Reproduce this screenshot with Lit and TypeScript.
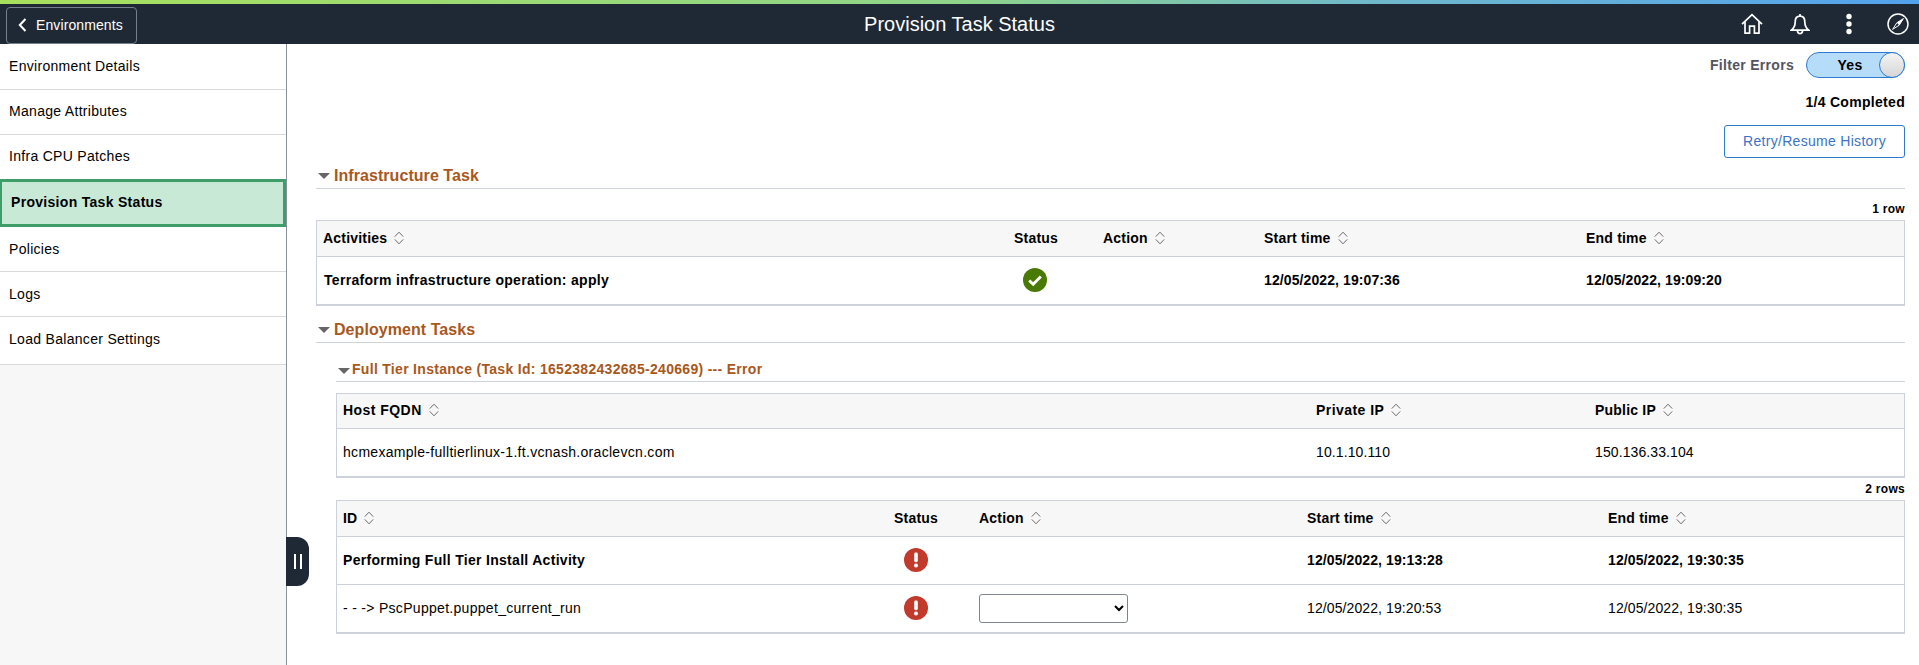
import { LitElement, html, css } from "lit";
import { customElement } from "lit/decorators.js";

const sortIcon = html`<svg class="sort" width="10" height="14" viewBox="0 0 10 14" fill="none" stroke="#6b6b6b" stroke-width="1"><path d="M.8 5.6 5 1.2l4.2 4.4M.8 8.4 5 12.8l4.2-4.4"/></svg>`;
const okIcon = html`<svg width="24" height="24" viewBox="0 0 24 24"><circle cx="12" cy="12" r="12" fill="#4a7a06"/><path d="M6.2 12.4l4 3.8 7.6-7.6" fill="none" stroke="#fff" stroke-width="2.8"/></svg>`;
const errIcon = html`<svg width="24" height="24" viewBox="0 0 24 24"><circle cx="12" cy="12" r="12" fill="#c13a2b"/><rect x="10.2" y="4.6" width="3.6" height="9.6" rx="1.4" fill="#fff"/><circle cx="12" cy="17.6" r="2" fill="#fff"/></svg>`;
const caret = html`<span class="caret"></span>`;

type Cell = string | ReturnType<typeof html>;
const head = (labels: [string, boolean][]) => html`<div class="row head">
  ${labels.map(([l, s]) => html`<div class="cell">${l}${s ? sortIcon : ""}</div>`)}
</div>`;
const body = (cells: Cell[], bold = false) => html`<div class="row ${bold ? "bold" : ""}">
  ${cells.map((c) => html`<div class="cell">${c}</div>`)}
</div>`;

@customElement("app-root")
export class AppRoot extends LitElement {
  static styles = css`
    :host { display: block; height: 665px; overflow: hidden; font-family: "Liberation Sans", Arial, sans-serif; font-size: 14px; letter-spacing: .3px; color: #000; background: #fff; }
    * { box-sizing: border-box; }
    .strip { height: 4px; background: linear-gradient(90deg, #a8e05c 0%, #8fd48a 50%, #6fb8cc 72%, #52a2ee 100%); }
    .bar { height: 40px; background: #1e2935; display: grid; grid-template-columns: 1fr auto 1fr; align-items: center; color: #fff; }
    .back { justify-self: start; margin: 2px 0 0 6px; width: 131px; height: 37px; border: 1px solid #76808c; border-radius: 4px; display: flex; align-items: center; gap: 9px; padding-left: 11px; color: #fff; letter-spacing: .1px; }
    .title { font-size: 20px; letter-spacing: 0; }
    .tools { justify-self: end; display: flex; align-items: center; }
    .tools svg { display: block; }
    .i1 { margin-right: 27px; } .i2 { margin-right: 36px; } .i3 { margin-right: 35px; } .i4 { margin-right: 10px; }
    .page { display: flex; height: 621px; position: relative; }
    .side { width: 287px; flex: none; background: #f7f7f7; border-right: 1px solid #8a9199; }
    .item { height: 45px; background: #fff; border-bottom: 1px solid #d9d9d9; display: flex; align-items: center; padding: 0 0 2px 9px; }
    .item.first { height: 46px; }
    .item.nb { border-bottom: 0; height: 44px; }
    .item.active { height: 48px; background: #c8e9d6; border: 3px solid #3e9d68; border-left-width: 2px; font-weight: 700; padding-left: 9px; }
    .item.mid { padding-bottom: 0; }
    .item.last { height: 48px; padding-bottom: 4px; }
    .handle { position: absolute; left: 286px; top: 493px; width: 23px; height: 49px; background: #1e2935; border-radius: 0 12px 12px 0; display: flex; align-items: center; justify-content: center; gap: 4px; }
    .handle i { display: block; width: 2px; height: 15px; background: #fff; }
    .main { flex: 1; padding: 8px 14px 0 29px; min-width: 0; }
    .filter { display: flex; justify-content: flex-end; align-items: center; height: 26px; gap: 12px; }
    .filter b { color: #55555c; }
    .toggle { width: 99px; height: 26px; border-radius: 13px; border: 1px solid #2f7bd1; background: #b5dcf8; display: flex; align-items: center; position: relative; font-weight: 700; padding-left: 22px; }
    .toggle span { width: 42px; text-align: center; }
    .knob { position: absolute; right: -1px; top: -1px; width: 26px; height: 26px; border-radius: 50%; border: 1px solid #2f7bd1; background: linear-gradient(#f4f4f4, #d6d6d6); }
    .done { margin-top: 16px; height: 16px; line-height: 16px; text-align: right; font-weight: 700; }
    .btnrow { margin-top: 15px; display: flex; justify-content: flex-end; }
    .btn { width: 181px; height: 33px; border: 1px solid #2f78cf; border-radius: 3px; display: flex; align-items: center; justify-content: center; color: #3d72c4; padding-bottom: 1px; }
    .sec { display: flex; align-items: center; height: 25px; border-bottom: 1px solid #cfd3da; font-weight: 700; font-size: 16px; letter-spacing: .06px; color: #a9581c; padding-left: 2px; padding-bottom: 1px; }
    .sec.one { margin-top: 6px; }
    .sec.two { margin-top: 12px; }
    .caret { width: 0; height: 0; border-left: 6px solid transparent; border-right: 6px solid transparent; border-top: 6px solid #666; margin: 1px 4px 0 0; }
    .sub { margin: 15px 0 0 20px; display: flex; align-items: center; height: 24px; border-bottom: 1px solid #cfd3da; font-weight: 700; color: #a9581c; padding-left: 2px; padding-bottom: 1px; }
    .sub .caret { margin-right: 2px; margin-top: 3px; }
    .count { height: 16px; line-height: 16px; text-align: right; font-size: 12px; font-weight: 700; }
    .count.a { margin-top: 12px; margin-bottom: 3px; }
    .count.b { margin-top: 3px; margin-bottom: 3px; }
    .table { border: 1px solid #cdd2da; border-bottom-width: 2px; }
    .nest { margin-left: 20px; }
    .table.host { margin-top: 11px; }
    .row { display: grid; height: 48px; align-items: center; border-bottom: 1px solid #cdd2da; }
    .row:last-child { border-bottom: 0; height: 47px; }
    .row.head { height: 36px; background: #f7f7f7; font-weight: 700; letter-spacing: .2px; }
    .host .row.head { height: 35px; }
    .row.bold { font-weight: 700; }
    .cell { padding: 0 0 2px 7px; display: flex; align-items: center; min-width: 0; white-space: nowrap; }
    .sort { margin-left: 7px; }
    .c1 .row { grid-template-columns: 691px 89px 161px 322px 1fr; }
    .c1 .cell { padding-left: 6px; }
    .c1 .row:not(.head) .cell:first-child { padding-left: 7px; }
    .c1 .row:not(.head) .cell:nth-child(2) { padding-left: 15px; }
    .c1 .row:not(.head) .cell:nth-child(n+4), .c3 .row:not(.head) .cell:nth-child(n+4), .c2 .row:not(.head) .cell:nth-child(n+2) { letter-spacing: .1px; }
    .c2 .row { grid-template-columns: 972px 279px 1fr; }
    .c2 .cell:first-child, .c3 .cell:first-child { padding-left: 6px; }
    .c2 .row.head .cell:nth-child(-n+2) { letter-spacing: .45px; }
    .c3 .row { grid-template-columns: 550px 85px 328px 301px 1fr; }
    .c3 .row:not(.head) .cell:nth-child(2) { padding-left: 17px; }
    .c3 .row:not(.head) .cell:nth-child(3) { padding-bottom: 0; }
    select { width: 149px; height: 29px; background: #fff; border: 1px solid #7d858f; border-radius: 3px; font: inherit; }
  `;

  render() {
    const items = ["Environment Details", "Manage Attributes", "Infra CPU Patches", "Provision Task Status", "Policies", "Logs", "Load Balancer Settings"];
    const cls = ["first", "", "nb", "active", "mid", "mid", "last"];
    return html`
      <div class="strip"></div>
      <div class="bar">
        <div class="back">
          <svg width="9" height="14" viewBox="0 0 9 14" fill="none" stroke="#fff" stroke-width="2"><path d="M7.5 1 1.8 7l5.7 6"/></svg>
          <span>Environments</span>
        </div>
        <div class="title">Provision Task Status</div>
        <div class="tools">
          <svg class="i1" width="22" height="22" viewBox="0 0 22 22" fill="none" stroke="#fff" stroke-width="1.7"><path d="M1 11.2 11 1.6l10 9.6"/><path d="M4 9v11.2h4.6v-7h4.8v7H18V9"/></svg>
          <svg class="i2" width="20" height="22" viewBox="0 0 20 22" fill="none" stroke="#fff" stroke-width="1.7"><path d="M10 1v2.2M10 3.2c-3.4 0-4.8 2.6-4.8 5.6 0 4.4-1.5 6.6-3.9 8.4h17.4c-2.4-1.8-3.9-4-3.9-8.4 0-3 -1.4-5.6-4.8-5.6Z"/><path d="M7.4 17.6c.2 2 1.2 3 2.6 3s2.4-1 2.6-3"/></svg>
          <svg class="i3" width="6" height="22" viewBox="0 0 6 22" fill="#fff"><circle cx="3" cy="3.5" r="2.7"/><circle cx="3" cy="11" r="2.7"/><circle cx="3" cy="18.5" r="2.7"/></svg>
          <svg class="i4" width="22" height="22" viewBox="0 0 22 22" fill="none" stroke="#fff" stroke-width="1.5"><circle cx="11" cy="11" r="10"/><path d="M16.4 5.6 12.2 12.2 5.6 16.4 9.8 9.8Z" stroke-width="1"/><path d="M16.4 5.6 12.2 12.2 9.8 9.8Z" fill="#fff" stroke="none"/></svg>
        </div>
      </div>
      <div class="page">
        <nav class="side">
          ${items.map((t, i) => html`<div class="item ${cls[i]}">${t}</div>`)}
        </nav>
        <div class="handle"><i></i><i></i></div>
        <main class="main">
          <div class="filter"><b>Filter Errors</b><div class="toggle"><span>Yes</span><div class="knob"></div></div></div>
          <div class="done">1/4 Completed</div>
          <div class="btnrow"><div class="btn">Retry/Resume History</div></div>

          <div class="sec one">${caret}Infrastructure Task</div>
          <div class="count a">1 row</div>
          <div class="table c1">
            ${head([["Activities", true], ["Status", false], ["Action", true], ["Start time", true], ["End time", true]])}
            ${body(["Terraform infrastructure operation: apply", okIcon, "", "12/05/2022, 19:07:36", "12/05/2022, 19:09:20"], true)}
          </div>

          <div class="sec two">${caret}Deployment Tasks</div>
          <div class="sub">${caret}Full Tier Instance (Task Id: 1652382432685-240669) --- Error</div>
          <div class="table nest host c2">
            ${head([["Host FQDN", true], ["Private IP", true], ["Public IP", true]])}
            ${body(["hcmexample-fulltierlinux-1.ft.vcnash.oraclevcn.com", "10.1.10.110", "150.136.33.104"])}
          </div>
          <div class="count b">2 rows</div>
          <div class="table nest c3">
            ${head([["ID", true], ["Status", false], ["Action", true], ["Start time", true], ["End time", true]])}
            ${body(["Performing Full Tier Install Activity", errIcon, "", "12/05/2022, 19:13:28", "12/05/2022, 19:30:35"], true)}
            ${body(["- - -> PscPuppet.puppet_current_run", errIcon, html`<select aria-label="Action"><option></option></select>`, "12/05/2022, 19:20:53", "12/05/2022, 19:30:35"])}
          </div>
        </main>
      </div>
    `;
  }
}
